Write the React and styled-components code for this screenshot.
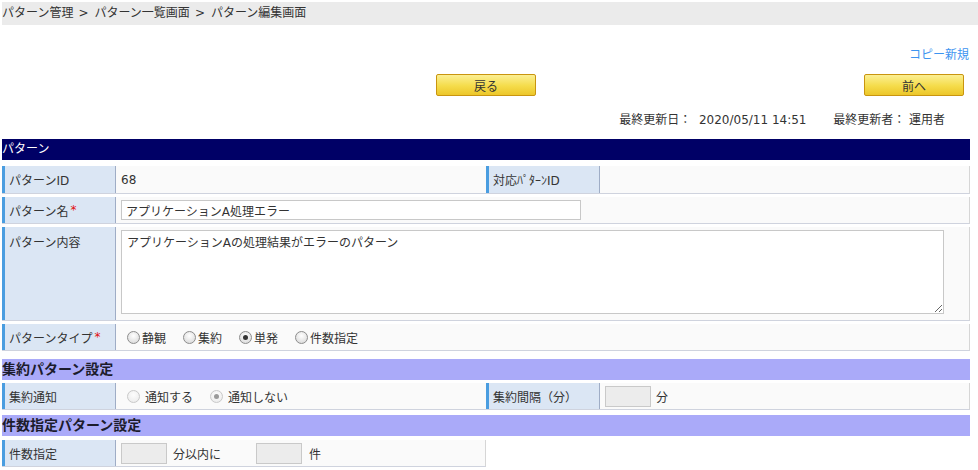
import React from 'react';
import styled, { createGlobalStyle } from 'styled-components';

const Global = createGlobalStyle`
  html, body { margin: 0; padding: 0; background: #fff; }
  body {
    font-family: "DejaVu Sans", "Noto Sans CJK JP", sans-serif;
    font-size: 12px;
    color: #333;
  }
  * { box-sizing: border-box; }
`;

const Page = styled.div`
  padding: 2px 0 0 2px;
`;

const Breadcrumb = styled.div`
  height: 23px;
  line-height: 23px;
  background: #ebebeb;
  color: #333;
  white-space: nowrap;
`;

const Sep = styled.span`
  padding: 0 6px 0 5px;
`;

const Content = styled.div`
  width: 968px;
`;

const LinkRow = styled.div`
  margin-top: 22px;
  height: 17px;
  line-height: 17px;
  text-align: right;
  padding-right: 1px;
`;

const Link = styled.a`
  color: #3d94f0;
  text-decoration: none;
  cursor: pointer;
`;

const ButtonRow = styled.div`
  margin-top: 10px;
  display: grid;
  grid-template-columns: 1fr auto 1fr;
  align-items: center;
`;

const Button = styled.button`
  width: 100px;
  height: 22px;
  padding: 0;
  font-family: inherit;
  font-size: 12px;
  color: #333;
  border: 1px solid #c9950f;
  border-radius: 2px;
  background: linear-gradient(#fbef93, #f5dc4a 55%, #ecc62a);
  cursor: pointer;
  justify-self: ${p => (p.$end ? 'end' : 'center')};
  margin-right: ${p => (p.$end ? '6px' : '0')};
`;

const Meta = styled.div`
  margin-top: 15px;
  line-height: 18px;
  text-align: right;
  padding-right: 25px;
  white-space: pre;
`;

const SectionHeader = styled.div`
  margin-top: ${p => p.$mt || 8}px;
  height: 21px;
  line-height: 21px;
  background: ${p => (p.$navy ? '#000066' : '#aaaaf9')};
  color: ${p => (p.$navy ? '#fff' : '#1c1c2c')};
  font-size: ${p => (p.$navy ? '12px' : '14px')};
  font-weight: ${p => (p.$navy ? 'normal' : 'bold')};
`;

const Row = styled.div`
  display: flex;
  margin-top: ${p => p.$mt ?? 3}px;
  width: ${p => (p.$half ? '484px' : '968px')};
  min-height: ${p => p.$h || 27}px;
  border-bottom: 1px solid #cfd3de;
  border-right: 1px solid #d6d6d6;
  background: #fafafa;
`;

const Label = styled.div`
  width: 114px;
  flex: none;
  border-left: 3px solid #4a9de0;
  border-right: 1px solid #9fadc6;
  background: #dbe6f4;
  padding: ${p => (p.$top ? '6px 4px 0' : '0 4px')};
  display: flex;
  align-items: ${p => (p.$top ? 'flex-start' : 'center')};
  color: #333;
  white-space: nowrap;
`;

const Req = styled.span`
  color: #e21010;
  margin-left: 2px;
  font-size: 12px;
`;

const Value = styled.div`
  flex: ${p => (p.$w ? 'none' : '1')};
  width: ${p => (p.$w ? `${p.$w}px` : 'auto')};
  display: flex;
  align-items: ${p => (p.$top ? 'flex-start' : 'center')};
  padding: ${p => (p.$top ? '3px 0 0 5px' : '0 0 0 5px')};
  color: #333;
`;

const TextInput = styled.input`
  width: 460px;
  height: 20px;
  border: 1px solid #c8c8c8;
  background: #fff;
  font-family: inherit;
  font-size: 12px;
  color: #333;
  padding: 0 4px;
  outline: none;
`;

const TextArea = styled.textarea`
  width: 823px;
  height: 84px;
  border: 1px solid #c8c8c8;
  background: #fff;
  font-family: inherit;
  font-size: 12px;
  color: #333;
  padding: 2px 5px;
  outline: none;
  resize: both;
  display: block;
`;

const SmallInput = styled.input`
  width: 46px;
  height: 21px;
  border: 1px solid #c9c9c9;
  background: #ececec;
  font-family: inherit;
  font-size: 12px;
  padding: 0 3px;
  outline: none;
`;

const Unit = styled.span`
  margin: 0 ${p => p.$mr || 0}px 0 ${p => p.$ml || 6}px;
  color: #333;
`;

const RadioGroup = styled.div`
  display: flex;
  align-items: center;
  padding-left: 6px;
`;

const Option = styled.label`
  display: inline-flex;
  align-items: center;
  margin-right: 17px;
  color: #333;
`;

const Circle = styled.span`
  width: 13px;
  height: 13px;
  border-radius: 50%;
  flex: none;
  border: 1px solid ${p => (p.$disabled ? '#c9c9c9' : '#8d8d8d')};
  background: ${p =>
    p.$disabled
      ? 'radial-gradient(circle at 50% 35%, #fdfdfd, #e9e9e9)'
      : 'radial-gradient(circle at 50% 35%, #ffffff, #d4d4d4)'};
  display: inline-flex;
  align-items: center;
  justify-content: center;
  margin-right: ${p => p.$space || 2}px;
  &::after {
    content: '';
    width: 5px;
    height: 5px;
    border-radius: 50%;
    background: ${p => (p.$disabled ? '#9a9a9a' : '#333')};
    display: ${p => (p.$checked ? 'block' : 'none')};
  }
`;

const Radio = ({ label, checked, disabled, space }) => (
  <Option>
    <Circle $checked={checked} $disabled={disabled} $space={space} />
    {label}
  </Option>
);

export default function App() {
  return (
    <>
      <Global />
      <Page>
        <Breadcrumb>
          パターン管理<Sep>&gt;</Sep>パターン一覧画面<Sep>&gt;</Sep>パターン編集画面
        </Breadcrumb>
        <Content>
          <LinkRow>
            <Link>コピー新規</Link>
          </LinkRow>
          <ButtonRow>
            <span />
            <Button>戻る</Button>
            <Button $end>前へ</Button>
          </ButtonRow>
          <Meta>{'最終更新日：  2020/05/11 14:51       最終更新者： 運用者'}</Meta>

          <SectionHeader $navy $mt={10}>パターン</SectionHeader>
          <Row $mt={6} $h={28}>
            <Label>パターンID</Label>
            <Value $w={370}>68</Value>
            <Label>対応ﾊﾟﾀｰﾝID</Label>
            <Value />
          </Row>
          <Row $h={27}>
            <Label>
              パターン名<Req>*</Req>
            </Label>
            <Value>
              <TextInput defaultValue="アプリケーションA処理エラー" />
            </Value>
          </Row>
          <Row $h={94}>
            <Label $top>パターン内容</Label>
            <Value $top>
              <TextArea defaultValue="アプリケーションAの処理結果がエラーのパターン" />
            </Value>
          </Row>
          <Row $h={27}>
            <Label>
              パターンタイプ<Req>*</Req>
            </Label>
            <Value>
              <RadioGroup>
                <Radio label="静観" />
                <Radio label="集約" />
                <Radio label="単発" checked />
                <Radio label="件数指定" />
              </RadioGroup>
            </Value>
          </Row>

          <SectionHeader $mt={8}>集約パターン設定</SectionHeader>
          <Row $h={27}>
            <Label>集約通知</Label>
            <Value $w={370}>
              <RadioGroup>
                <Radio label="通知する" disabled space={5} />
                <Radio label="通知しない" checked disabled space={5} />
              </RadioGroup>
            </Value>
            <Label>集約間隔（分）</Label>
            <Value>
              <SmallInput disabled />
              <Unit $ml={5}>分</Unit>
            </Value>
          </Row>

          <SectionHeader $mt={5}>件数指定パターン設定</SectionHeader>
          <Row $half $mt={4} $h={27}>
            <Label>件数指定</Label>
            <Value>
              <SmallInput disabled />
              <Unit $ml={6} $mr={35}>分以内に</Unit>
              <SmallInput disabled />
              <Unit $ml={7}>件</Unit>
            </Value>
          </Row>
        </Content>
      </Page>
    </>
  );
}
